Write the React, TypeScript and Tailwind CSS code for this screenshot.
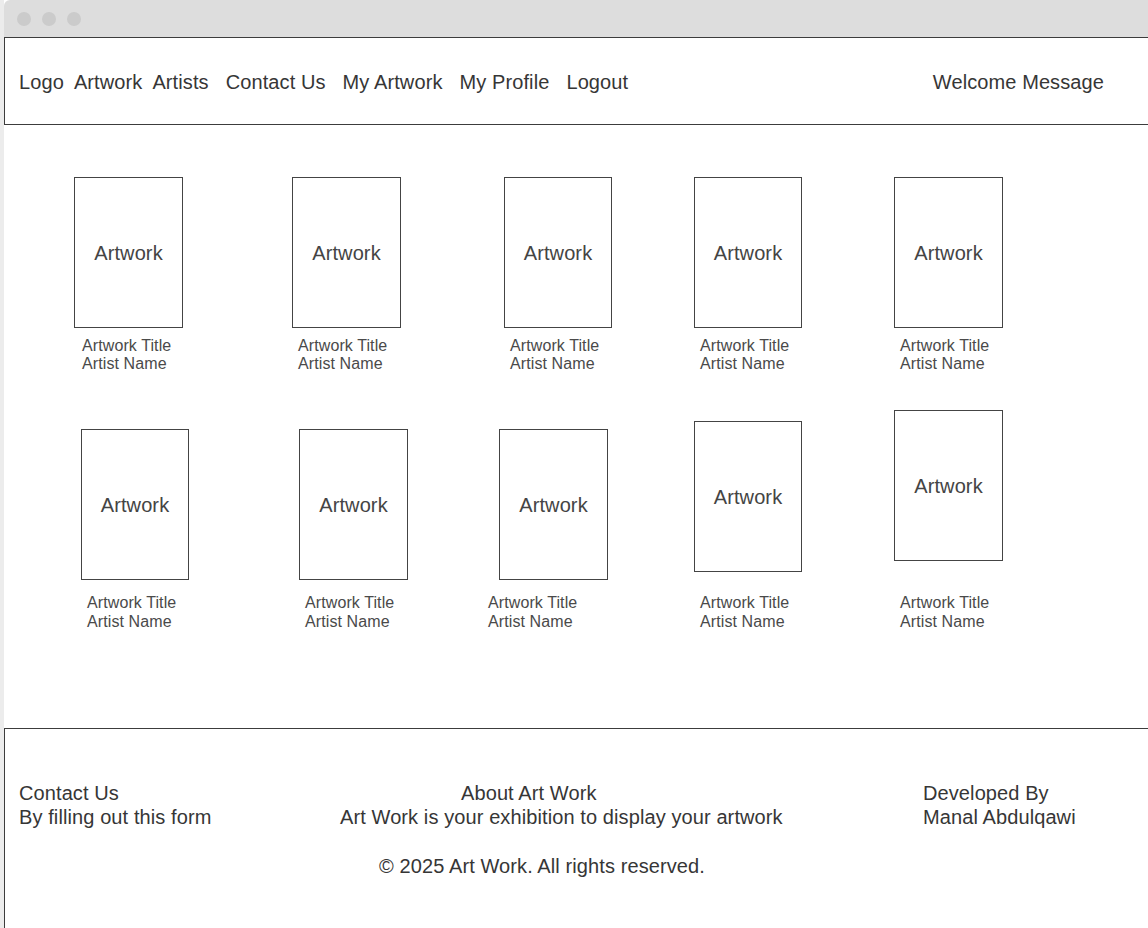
import React from 'react';

const navItems = [
  { label: 'Logo', cls: 'ml-[14px]' },
  { label: 'Artwork', cls: 'ml-[10px]' },
  { label: 'Artists', cls: 'ml-[10px]' },
  { label: 'Contact Us', cls: 'ml-[17px]' },
  { label: 'My Artwork', cls: 'ml-[17px]' },
  { label: 'My Profile', cls: 'ml-[17px]' },
  { label: 'Logout', cls: 'ml-[17px]' },
];

interface Card {
  ml: string;
  w: string;
  boxTop: string;
  capMl: string;
}

const rowOne: Card[] = [
  { ml: 'ml-[70px]', w: 'w-[109px]', boxTop: 'mt-0', capMl: 'ml-[8px]' },
  { ml: 'ml-[109px]', w: 'w-[109px]', boxTop: 'mt-0', capMl: 'ml-[6px]' },
  { ml: 'ml-[103px]', w: 'w-[108px]', boxTop: 'mt-0', capMl: 'ml-[6px]' },
  { ml: 'ml-[82px]', w: 'w-[108px]', boxTop: 'mt-0', capMl: 'ml-[6px]' },
  { ml: 'ml-[92px]', w: 'w-[109px]', boxTop: 'mt-0', capMl: 'ml-[6px]' },
];

const rowTwo: Card[] = [
  { ml: 'ml-[77px]', w: 'w-[108px]', boxTop: 'mt-[19px]', capMl: 'ml-[6px]' },
  { ml: 'ml-[110px]', w: 'w-[109px]', boxTop: 'mt-[19px]', capMl: 'ml-[6px]' },
  { ml: 'ml-[91px]', w: 'w-[109px]', boxTop: 'mt-[19px]', capMl: 'ml-[-11px]' },
  { ml: 'ml-[86px]', w: 'w-[108px]', boxTop: 'mt-[11px]', capMl: 'ml-[6px]' },
  { ml: 'ml-[92px]', w: 'w-[109px]', boxTop: 'mt-0', capMl: 'ml-[6px]' },
];

const ArtCard: React.FC<{ card: Card; areaH: string; lead: string }> = ({ card, areaH, lead }) => (
  <div className={`flex flex-col shrink-0 ${card.w} ${card.ml}`}>
    <div className={areaH}>
      <div
        className={`h-[151px] border border-[#444] flex items-center justify-center text-[20px] text-[#444] ${card.w} ${card.boxTop}`}
      >
        Artwork
      </div>
    </div>
    <div className={`text-[16px] text-[#4a4a4a] whitespace-nowrap ${lead} ${card.capMl}`}>
      <div>Artwork Title</div>
      <div>Artist Name</div>
    </div>
  </div>
);

export default function App() {
  return (
    <div className="w-[1148px] h-[928px] flex bg-white overflow-hidden font-['Liberation_Sans',Arial,sans-serif] tracking-[0.1px] text-[#363636]">
      <div className="w-[4px] shrink-0 bg-[#ececec]" />
      <div className="flex-1 flex flex-col">
        {/* window chrome */}
        <div className="h-[37px] shrink-0 bg-[#dddddd] rounded-tl-[6px] flex items-center pl-[13px] gap-[11px]">
          <div className="w-[14px] h-[14px] rounded-full bg-[#cbcbcb]" />
          <div className="w-[14px] h-[14px] rounded-full bg-[#cbcbcb]" />
          <div className="w-[14px] h-[14px] rounded-full bg-[#cbcbcb]" />
        </div>

        {/* header */}
        <div className="h-[88px] shrink-0 border-t border-b border-l border-[#3c3c3c] flex items-center pt-[2px] text-[20px] pr-[44px]">
          {navItems.map((n) => (
            <span key={n.label} className={n.cls}>
              {n.label}
            </span>
          ))}
          <span className="ml-auto">Welcome Message</span>
        </div>

        {/* gallery */}
        <div className="flex-1 flex flex-col pt-[52px]">
          <div className="flex items-start">
            {rowOne.map((c, i) => (
              <ArtCard key={i} card={c} areaH="h-[160px]" lead="leading-[18px]" />
            ))}
          </div>
          <div className="flex items-start mt-[37px]">
            {rowTwo.map((c, i) => (
              <ArtCard key={i} card={c} areaH="h-[183px]" lead="leading-[19px]" />
            ))}
          </div>
        </div>

        {/* footer */}
        <div className="h-[200px] shrink-0 border-t border-l border-[#3c3c3c] flex flex-col pt-[52px] text-[20px] leading-[24px]">
          <div className="flex">
            <div className="w-[335px] shrink-0 pl-[14px]">
              <div>Contact Us</div>
              <div>By filling out this form</div>
            </div>
            <div className="w-[583px] shrink-0">
              <div className="pl-[121px]">About Art Work</div>
              <div>Art Work is your exhibition to display your artwork</div>
            </div>
            <div>
              <div>Developed By</div>
              <div>Manal Abdulqawi</div>
            </div>
          </div>
          <div className="mt-[25px] pl-[374px]">© 2025 Art Work. All rights reserved.</div>
        </div>
      </div>
    </div>
  );
}
